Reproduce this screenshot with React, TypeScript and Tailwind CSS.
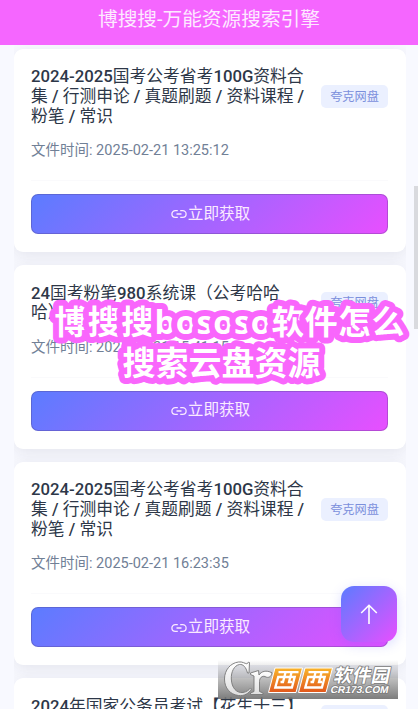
import React from 'react';

interface IResource {
	title: string;
	time: string;
	source: string;
}

const resources: IResource[] = [
	{
		title: '2024-2025国考公考省考100G资料合集 / 行测申论 / 真题刷题 / 资料课程 / 粉笔 / 常识',
		time: '2025-02-21 13:25:12',
		source: '夸克网盘',
	},
	{
		title: '24国考粉笔980系统课（公考哈哈哈）',
		time: '2025-02-21 15:41:15',
		source: '夸克网盘',
	},
	{
		title: '2024-2025国考公考省考100G资料合集 / 行测申论 / 真题刷题 / 资料课程 / 粉笔 / 常识',
		time: '2025-02-21 16:23:35',
		source: '夸克网盘',
	},
	{
		title: '2024年国家公务员考试【花生十三】系统班',
		time: '2025-02-21 16:30:08',
		source: '夸克网盘',
	},
];

// latin runs are medium, chinese runs stay regular
function Title({ text }: { text: string }) {
	return (
		<h2 className="w-[277px] text-[16.75px] leading-[19.7px] font-normal text-[#2d3748] [text-spacing-trim:space-all]">
			{text.split(/([\x20-\x7e]+)/).map((part, i) =>
				i % 2 ? (
					<span key={i} className="font-medium">
						{part}
					</span>
				) : (
					part
				)
			)}
		</h2>
	);
}

function LinkIcon() {
	return (
		<svg
			viewBox="0 0 16 10"
			className="h-[10px] w-4 shrink-0"
			fill="none"
			stroke="currentColor"
			strokeWidth="1.3"
		>
			<path d="M6.8 1.6H4.3a3.4 3.4 0 0 0 0 6.8h2.5M9.2 1.6h2.5a3.4 3.4 0 0 1 0 6.8H9.2M5.5 5h5" />
		</svg>
	);
}

function ResourceCard({ item }: { item: IResource }) {
	return (
		<div className="rounded-[9px] bg-white pt-[18.5px] pr-[18px] pb-[18px] pl-[17.5px] shadow-[0_4px_16px_rgba(30,30,60,0.09)]">
			<div className="flex items-center justify-between">
				<Title text={item.title} />
				<span className="flex h-[23px] w-[67px] shrink-0 items-center justify-center rounded-[5px] bg-[#ebf0ff] text-[12.2px] text-[#7b8fdc]">
					{item.source}
				</span>
			</div>
			<p className="mt-[13.9px] text-[14.5px] leading-[22px] text-[#718096]">
				文件时间: {item.time}
			</p>
			<div className="mt-[18px] border-t border-[#fafafc] pt-[12.7px]">
				<button className="flex h-[40.2px] w-full items-center justify-center rounded-[7px] border border-[#4b3a78]/30 bg-linear-[135deg,#5b7cff,#e84fff] bg-origin-border pt-px pl-0.5 text-[15.6px] text-[#fbeaff]">
					<LinkIcon />
					<span className="ml-px">立即获取</span>
				</button>
			</div>
		</div>
	);
}

function Watermark() {
	return (
		<svg viewBox="0 0 180 39" className="absolute top-[660px] left-[218px] h-[39px] w-[180px]">
			<defs>
				<linearGradient id="shade" x1="0" y1="0" x2="0" y2="1">
					<stop offset="0" stopColor="#777" stopOpacity="0" />
					<stop offset="0.5" stopColor="#777" stopOpacity="0.5" />
					<stop offset="1" stopColor="#6e6e6e" stopOpacity="0.9" />
				</linearGradient>
				<linearGradient id="orange" x1="0" y1="0" x2="0" y2="1">
					<stop offset="0" stopColor="#f9b52c" />
					<stop offset="1" stopColor="#e2571c" />
				</linearGradient>
				<linearGradient id="silver" x1="0" y1="0" x2="0" y2="1">
					<stop offset="0" stopColor="#fff" />
					<stop offset="1" stopColor="#dedede" />
				</linearGradient>
			</defs>
			<rect width="180" height="39" fill="url(#shade)" />
			{/* Cr mark */}
			<g fill="url(#silver)" stroke="#777" strokeWidth="0.9" strokeLinejoin="round">
				<path d="M31.5 2.5 L31 13 L29.5 13 C28 7 25 4 21.5 4.5 C16 5.5 13 12 13.3 19 C13.7 28 18.5 33.2 25 32.5 C28.5 32 31 30 32.5 28 L33.5 29 C31 33.5 26 36.3 20.5 35.5 C12 34.5 6.5 28 6.5 19 C6.5 10 12.5 3 20.5 2 C24.5 1.4 27 3.7 28.7 3.7 C29.7 3.7 30 2.8 30.4 2.2 Z" />
				<path d="M32.5 13 L40.5 10.5 L41 15 C43.5 11.3 48 9.8 54 12.8 C53.5 17 50 18.5 47 16.5 C44 15.5 41.5 18 41.5 21.5 L41.5 31.5 L45 33 L45 34.5 L32.5 34.5 L32.5 33 L36 31.5 L36 16 L32.5 14.5 Z" />
			</g>
			<path d="M57 8h27.5L78 32.5H50.5zM87 8h27.5L108 32.5H80.5z" fill="url(#orange)" stroke="#fff" strokeWidth="1" />
			<g fill="none" stroke="#fff" strokeWidth="2.3">
				<path d="M60.5 12.2h20M60.2 17h16.5l-2.8 10.5H57.3zM67.5 12.5l-2.5 9.5h-2.5M73.5 12.5L71 22h3" />
				<path d="M90.5 12.2h20M90.2 17h16.5l-2.8 10.5H87.3zM97.5 12.5l-2.5 9.5h-2.5M103.5 12.5L101 22h3" />
			</g>
			<g
				className="font-['Liberation_Sans','Noto_Sans_CJK_SC',sans-serif] font-bold [paint-order:stroke]"
				fill="#fff"
				stroke="#7c7c7c"
				strokeWidth="1.7"
				strokeLinejoin="round"
			>
				<text fontSize="18.5" textLength="56" transform="translate(115 22.3) skewX(-12)">
					软件园
				</text>
				<text
					fontSize="10"
					textLength="58"
					lengthAdjust="spacingAndGlyphs"
					transform="translate(112 32.5) skewX(-12)"
				>
					CR173.COM
				</text>
			</g>
		</svg>
	);
}

function App() {
	return (
		<div className="relative h-[709px] w-[418px] overflow-hidden bg-[#f8f9ff] font-[Roboto,'Noto_Sans_CJK_SC',sans-serif]">
			<header className="flex h-[45px] items-center justify-center bg-[#f566ff] pb-[6px] text-[19.7px] text-[#fdeaff]">
				博搜搜-万能资源搜索引擎
			</header>
			<main className="ml-[13.5px] flex h-[664px] w-[392.5px] flex-col gap-[13px] overflow-hidden pt-[3.7px]">
				{resources.map((item, i) => (
					<ResourceCard key={i} item={item} />
				))}
			</main>

			<div className="absolute top-[186px] right-0 h-[143px] w-1 bg-[#d9dade]" />

			<button className="absolute top-[586px] left-[341px] flex h-14 w-14 items-center justify-center rounded-[13px] bg-linear-[135deg,#5b7cff,#e84fff] text-white shadow-[0_3px_12px_rgba(91,100,255,0.22)]">
				<svg viewBox="0 0 18 20" className="h-5 w-[18px]" fill="none" stroke="currentColor" strokeWidth="1.6">
					<path d="M9 20V1.5M1.2 9 9 1.3 16.8 9" />
				</svg>
			</button>

			<svg
				viewBox="0 0 370 100"
				className="absolute top-[292px] left-[44px] h-[100px] w-[370px] font-['Open_Sans','Noto_Sans_CJK_SC',sans-serif] text-[33px] font-bold [paint-order:stroke]"
				fill="#fff"
				stroke="#f966fc"
				strokeWidth="12"
				strokeLinejoin="round"
			>
				<text x="10.5" y="42" textLength="350">
					博搜搜bososo软件怎么
				</text>
				<text x="78.5" y="83">
					搜索云盘资源
				</text>
			</svg>

			<Watermark />
		</div>
	);
}

export default App;
